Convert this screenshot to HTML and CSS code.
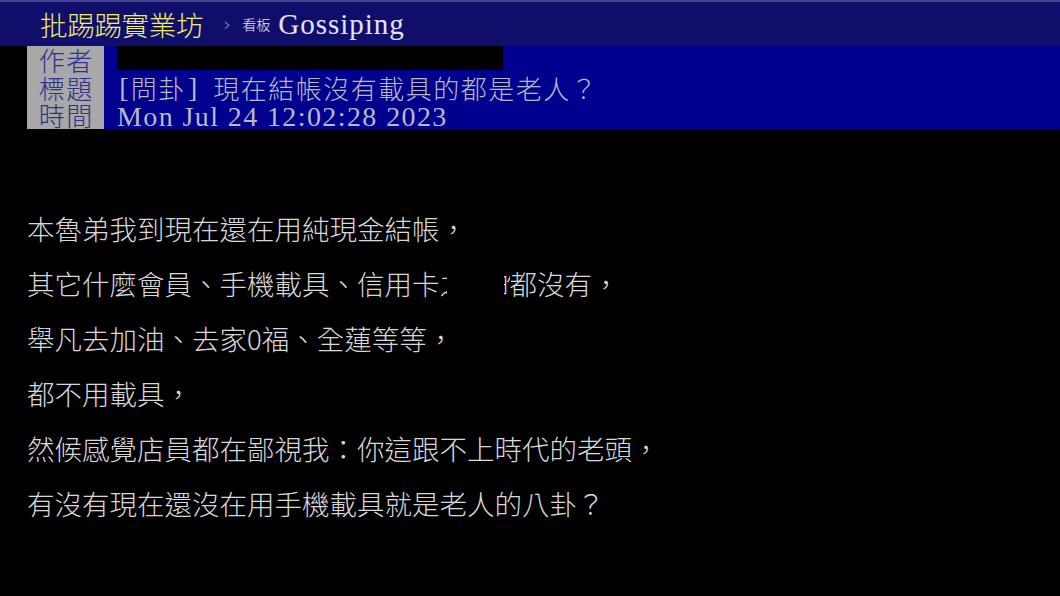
FILE: index.html
```html
<!DOCTYPE html>
<html lang="zh-Hant">
<head>
<meta charset="utf-8">
<title>[問卦] 現在結帳沒有載具的都是老人？</title>
<link rel="stylesheet" href="styles.css">
</head>
<body>
<header class="topbar">
  <span class="site">批踢踢實業坊</span>
  <span class="sep">›</span>
  <span class="board-tag">看板</span>
  <span class="board">Gossiping</span>
</header>
<section class="meta">
  <div class="meta-row">
    <div class="tag">作者</div>
    <div class="val"><span class="black-box"></span></div>
  </div>
  <div class="meta-row">
    <div class="tag">標題</div>
    <div class="val"><span class="hw">[</span>問卦<span class="hw">]</span><span class="hw"></span>現在結帳沒有載具的都是老人？</div>
  </div>
  <div class="meta-row">
    <div class="tag">時間</div>
    <div class="val"><span class="en">Mon Jul 24 12:02:28 2023</span></div>
  </div>
</section>
<main class="content">
  <p class="line">本魯弟我到現在還在用純現金結帳，</p>
  <p class="line">其它什麼會員、手機載具、信用卡<span class="redact">之類的</span>都沒有，</p>
  <p class="line">舉凡去加油、去家0福、全蓮等等，</p>
  <p class="line">都不用載具，</p>
  <p class="line">然候感覺店員都在鄙視我：你這跟不上時代的老頭，</p>
  <p class="line">有沒有現在還沒在用手機載具就是老人的八卦？</p>
</main>
</body>
</html>
```

FILE: styles.css
```css
html, body {
  margin: 0;
  padding: 0;
  background: #000;
}

body {
  width: 1060px;
  height: 596px;
  overflow: hidden;
  font-family: "Noto Sans CJK TC", "Noto Sans CJK SC", sans-serif;
  font-weight: 300;
}

.topbar {
  height: 44px;
  border-top: 2px solid #44448c;
  background: #0f0f6b;
  display: flex;
  align-items: center;
  padding-left: 40px;
}

.site {
  color: #f2ec6c;
  font-size: 27.5px;
  line-height: 44px;
  letter-spacing: -0.3px;
}

.sep {
  color: #9a9ab8;
  font-family: "DejaVu Sans", sans-serif;
  font-size: 20px;
  margin-left: 20px;
  margin-right: 11px;
}

.board-tag {
  color: #e8e8f4;
  font-size: 14px;
  margin-right: 8px;
}

.board {
  color: #e4e4f8;
  font-family: "Liberation Serif", serif;
  font-size: 29px;
  letter-spacing: 1px;
  line-height: 44px;
}

.meta {
  display: flex;
  flex-direction: column;
}

.meta-row {
  display: flex;
  height: 27.5px;
  line-height: 27.5px;
  font-size: 26px;
  letter-spacing: 1.5px;
}

.tag {
  width: 77px;
  margin-left: 27px;
  padding-left: 1.5px;
  box-sizing: border-box;
  background: #a8a8a8;
  color: #30308e;
  text-align: center;
}

.val {
  flex: 1;
  background: #00008e;
  color: #b9b9c6;
  padding-left: 13px;
  white-space: nowrap;
}

.black-box {
  display: inline-block;
  width: 386px;
  height: 24px;
  background: #000;
  vertical-align: top;
}

.hw {
  display: inline-block;
  width: 13.75px;
  text-align: center;
  font-family: "Liberation Serif", serif;
  font-size: 28px;
  letter-spacing: 0;
  vertical-align: top;
}

.en {
  font-family: "Liberation Serif", serif;
  font-size: 28px;
  letter-spacing: 1.4px;
}

.content {
  padding: 72px 0 0 27px;
}

.line {
  margin: 0;
  font-size: 27.5px;
  line-height: 55px;
  color: #d8d8d8;
  white-space: nowrap;
}

.redact {
  display: inline-block;
  position: relative;
  width: 70px;
  overflow: hidden;
  white-space: nowrap;
  vertical-align: top;
}

.redact::after {
  content: "";
  position: absolute;
  top: 0;
  bottom: 0;
  left: 7px;
  right: 6px;
  background: #000;
}
```
